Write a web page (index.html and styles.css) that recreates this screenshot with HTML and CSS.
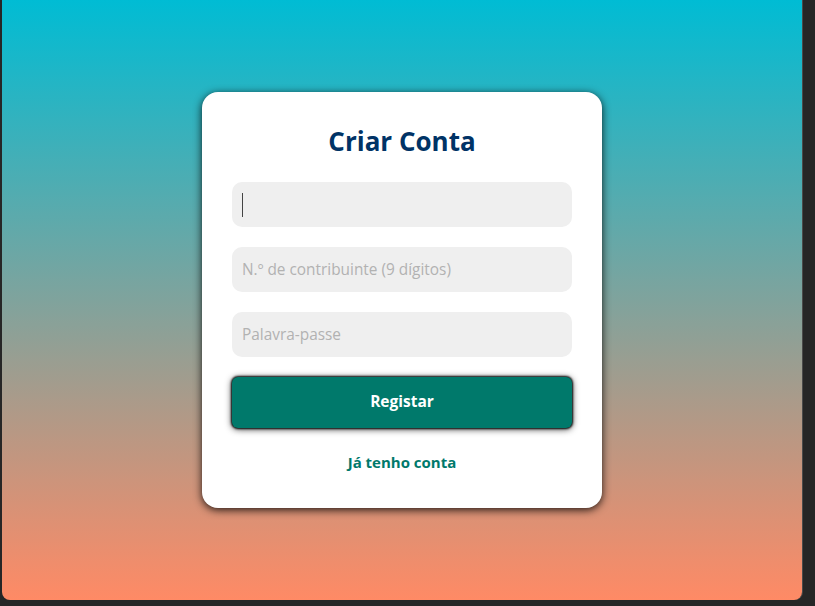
FILE: index.html
```html
<!DOCTYPE html>
<html lang="pt">
<head>
<meta charset="utf-8">
<title>Criar Conta</title>
<link rel="stylesheet" href="styles.css">
</head>
<body>
<div class="frame">
  <div class="card">
    <h2 class="title">Criar Conta</h2>
    <form class="form">
      <div class="field focused"><span class="caret"></span></div>
      <div class="field"><span class="ph">N.º de contribuinte (9 dígitos)</span></div>
      <div class="field"><span class="ph">Palavra-passe</span></div>
      <button type="button" class="btn">Registar</button>
    </form>
    <a class="link" href="#">Já tenho conta</a>
  </div>
</div>
</body>
</html>
```
FILE: styles.css
```css
html, body {
  margin: 0;
  padding: 0;
  background: #262626;
  width: 815px;
  height: 606px;
  overflow: hidden;
  font-family: "Open Sans", "Noto Sans", sans-serif;
}
.frame {
  margin-left: 2px;
  width: 800px;
  height: 600px;
  border-radius: 0 0 8px 8px;
  background: linear-gradient(to bottom, #00bcd4, #ff8a65);
  display: flex;
  align-items: center;
  justify-content: center;
  box-shadow: 1px 0 0 #4a4a4a;
}
.card {
  width: 340px;
  padding: 30px 30px 36px;
  background: #fff;
  border-radius: 16px;
  box-shadow: 0 2px 9px rgba(0, 0, 0, 0.85);
  display: flex;
  flex-direction: column;
  align-items: center;
}
.title {
  margin: 3px 0 24px;
  font-size: 26px;
  line-height: 33px;
  font-weight: 700;
  color: #003366;
}
.form {
  width: 100%;
  display: flex;
  flex-direction: column;
  gap: 20px;
}
.field {
  height: 45px;
  border-radius: 10px;
  background: #efefef;
  display: flex;
  align-items: center;
  padding: 0 10px;
  box-sizing: border-box;
}
.ph {
  font-size: 15.4px;
  color: #b2b2b2;
}
.caret {
  width: 1px;
  height: 24px;
  background: #444;
}
.btn {
  height: 51px;
  padding: 0 0 4px;
  border: 0;
  border-radius: 6px;
  background: #00796b;
  color: #fff;
  font-family: inherit;
  font-size: 15.5px;
  font-weight: 700;
  box-shadow: 0 0 2px 1px rgba(0, 0, 0, 0.9), 0 1px 7px rgba(0, 0, 0, 0.8);
}
.link {
  margin-top: 24px;
  font-size: 15px;
  font-weight: 700;
  color: #00796b;
  text-decoration: none;
  line-height: 20px;
}
```
